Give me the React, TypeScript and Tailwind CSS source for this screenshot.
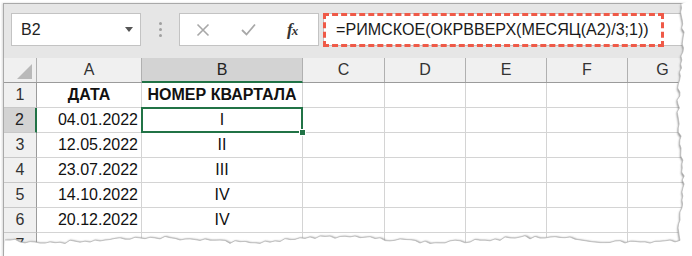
import React from 'react';

const cols = [
  { label: 'A', w: 105 },
  { label: 'B', w: 161 },
  { label: 'C', w: 82 },
  { label: 'D', w: 81 },
  { label: 'E', w: 81 },
  { label: 'F', w: 81 },
  { label: 'G', w: 70 },
];

const rows: [string, string][] = [
  ['ДАТА', 'НОМЕР КВАРТАЛА'],
  ['04.01.2022', 'I'],
  ['12.05.2022', 'II'],
  ['23.07.2022', 'III'],
  ['14.10.2022', 'IV'],
  ['20.12.2022', 'IV'],
  ['', ''],
];

// jagged torn-paper edge
function tornPath() {
  let seed = 7;
  const rnd = () => {
    seed = (seed * 9301 + 49297) % 233280;
    return seed / 233280;
  };
  const pts: string[] = [];
  // right edge: top to bottom
  for (let y = 4; y <= 236; y += 4) {
    const x = 679 + Math.sin(y / 23) * 2.5 + rnd() * 3;
    pts.push(`${x.toFixed(1)},${y}`);
  }
  // bottom edge: right to left
  for (let x = 680; x >= 4; x -= 5) {
    const y = 238 + Math.sin(x / 31) * 2.5 + rnd() * 3.5;
    pts.push(`${x},${y.toFixed(1)}`);
  }
  return pts;
}

function TornEdge() {
  const pts = tornPath();
  const line = 'M' + pts.join(' L');
  return (
    <svg className="absolute left-0 top-0 pointer-events-none z-20" width={692} height={256}>
      <defs>
        <filter id="sh" x="-5%" y="-5%" width="110%" height="110%">
          <feGaussianBlur stdDeviation="1.2" />
        </filter>
      </defs>
      <path d={line} fill="none" stroke="#6f6f6f" strokeWidth="2.5" filter="url(#sh)" transform="translate(1,1.5)" />
      <path d={line + ' L4,256 L692,256 L692,0 Z'} fill="#ffffff" />
      <path d={line} fill="none" stroke="#b9b9b9" strokeWidth="0.8" />
    </svg>
  );
}

export default function App() {
  const font = { fontFamily: '"Liberation Sans", Arial, sans-serif' };
  return (
    <div className="relative w-[692px] h-[256px] bg-white overflow-hidden" style={font}>
      <div className="ml-[3px] mt-[3px] w-[700px] border-l border-t border-[#a9a9a9] shadow-[-1px_0_2px_rgba(0,0,0,0.15)]">
        {/* formula toolbar */}
        <div className="h-[54px] bg-[#e6e6e6] flex items-start pt-[9px]">
          <div className="ml-[7px] w-[130px] h-[33px] bg-white border border-[#c3c3c3] flex items-center justify-between pl-[9px] pr-[7px]">
            <span className="text-[16px] text-[#222]">B2</span>
            <span className="w-0 h-0 border-l-[4px] border-r-[4px] border-t-[5px] border-l-transparent border-r-transparent border-t-[#555]" />
          </div>
          <div className="w-[38px] h-[33px] flex flex-col items-center justify-center gap-[3px]">
            <span className="w-[3px] h-[3px] bg-[#a0a0a0] rounded-full" />
            <span className="w-[3px] h-[3px] bg-[#a0a0a0] rounded-full" />
            <span className="w-[3px] h-[3px] bg-[#a0a0a0] rounded-full" />
          </div>
          <div className="w-[140px] h-[33px] bg-white border border-[#c3c3c3] flex items-center pl-[16px]">
            <svg width="14" height="14" viewBox="0 0 14 14">
              <path d="M1.5 1.5 L12.5 12.5 M12.5 1.5 L1.5 12.5" stroke="#a8a8a8" strokeWidth="1.6" fill="none" />
            </svg>
            <svg className="ml-[31px]" width="15" height="13" viewBox="0 0 15 13">
              <path d="M1 7 L5.5 11.5 L14 1.5" stroke="#a8a8a8" strokeWidth="1.8" fill="none" />
            </svg>
            <span className="ml-[31px] text-[17px] italic font-bold text-[#333] tracking-[-1px]" style={{ fontFamily: '"Liberation Serif", serif' }}>
              f<span className="text-[13px]">x</span>
            </span>
          </div>
          <div className="ml-[4px] flex-1 h-[33px] bg-white border-t border-b border-l border-[#c3c3c3] relative">
            <div className="absolute left-[-1px] top-[-1px] w-[341px] h-[34px] border-[3px] border-dashed border-[#ef5a48]" />
            <div className="pl-[12px] h-full flex items-center text-[16.1px] text-[#1a1a1a]">
              =РИМСКОЕ(ОКРВВЕРХ(МЕСЯЦ(A2)/3;1))
            </div>
          </div>
        </div>

        {/* column headers */}
        <div className="flex h-[25px] border-b border-[#9b9b9b] bg-[#f0f0f0]">
          <div className="w-[33px] border-r border-[#b0b0b0] relative">
            <div className="absolute right-[4px] bottom-[3px] w-0 h-0 border-l-[15px] border-b-[15px] border-l-transparent border-b-[#b9b9b9]" />
          </div>
          {cols.map((c) => (
            <div
              key={c.label}
              className={
                c.label === 'B'
                  ? 'shrink-0 flex items-center justify-center border-r border-[#b0b0b0] bg-[#d3d3d3] border-b-2 border-b-[#217346] mb-[-1px] text-[16px] text-[#222]'
                  : 'shrink-0 flex items-center justify-center border-r border-[#b0b0b0] text-[16px] text-[#333]'
              }
              style={{ width: c.w }}
            >
              {c.label}
            </div>
          ))}
        </div>

        {/* rows */}
        {rows.map((r, i) => (
          <div key={i} className="flex h-[25px]">
            <div
              className={
                i === 1
                  ? 'w-[33px] shrink-0 flex items-center justify-center bg-[#d3d3d3] border-r-2 border-[#217346] border-b border-b-[#c8c8c8] text-[16px] text-[#222]'
                  : 'w-[33px] shrink-0 flex items-center justify-center bg-[#f0f0f0] border-r border-[#9b9b9b] border-b border-b-[#c8c8c8] text-[16px] text-[#333]'
              }
            >
              {i + 1}
            </div>
            {cols.map((c, j) => (
              <div
                key={c.label}
                className={
                  j === 1 && i === 1
                    ? 'shrink-0 relative z-10 border-r border-b border-[#d4d4d4] flex items-center text-[16px] text-[#111]'
                    : 'shrink-0 relative border-r border-b border-[#d4d4d4] flex items-center text-[16px] text-[#111]'
                }
                style={{ width: c.w }}
              >
                {j === 0 && (
                  <span className={i === 0 ? 'w-full text-center font-bold' : 'w-full text-right pr-[3px]'}>{r[0]}</span>
                )}
                {j === 1 && (
                  <span className={i === 0 ? 'w-full text-center font-bold text-[16px]' : 'w-full text-center'}>{r[1]}</span>
                )}
                {j === 1 && i === 1 && (
                  <>
                    <div className="absolute left-[-1px] top-[-1px] right-[-1px] bottom-[-1px] border-2 border-[#217346]" />
                    <div className="absolute right-[-4px] bottom-[-4px] w-[7px] h-[7px] bg-[#217346] border border-white" />
                  </>
                )}
              </div>
            ))}
          </div>
        ))}
      </div>
      <TornEdge />
    </div>
  );
}
